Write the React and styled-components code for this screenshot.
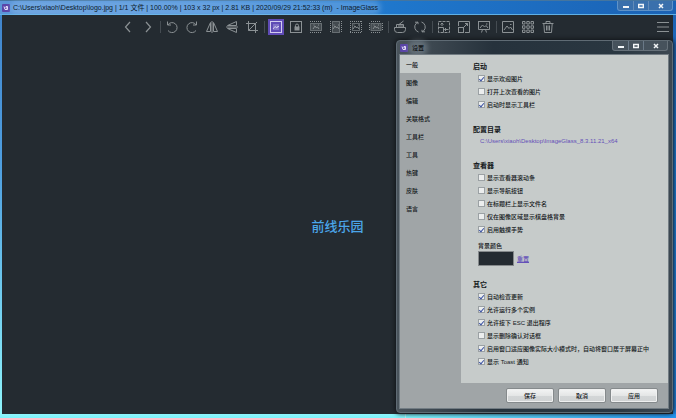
import { useState } from "react";
import styled, { createGlobalStyle, css } from "styled-components";

const GlobalStyle = createGlobalStyle`
  * {
    box-sizing: border-box;
  }
  body {
    margin: 0;
    font-family: "Liberation Sans", "Noto Sans CJK SC", sans-serif;
    font-size: 6px;
    font-weight: 500;
    color: #14181a;
  }
  button, input {
    font: inherit;
    margin: 0;
    padding: 0;
  }
`;

const Window = styled.div`
  position: relative;
  display: flex;
  flex-direction: column;
  height: 100vh;
  padding: 0 3px 4px 2px;
  background:
    linear-gradient(#8ff5fb, #7df3fa) bottom left / 60% 4px no-repeat,
    linear-gradient(90deg, #7df3fa, #2293ee) bottom right / 40% 4px no-repeat,
    linear-gradient(#3f83cb, #4f9fe0 40%, #8ff5fb) left / 2px 100% no-repeat,
    linear-gradient(#1c5fae, #1b7fdd 40%, #1d86e6) right / 3px 100% no-repeat;
`;

const TitleBar = styled.header`
  display: flex;
  align-items: center;
  height: 15px;
  margin: 0 -3px 0 -2px;
  padding: 0 3px 0 2px;
  border-top: 1px solid #44759f;
  border-bottom: 1px solid #5fb0e6;
  background: linear-gradient(90deg, #5c96d8, #4d90d8 30%, #1f77cc 58%, #1b62b4);
`;

const AppIcon = styled.span`
  display: grid;
  place-items: center;
  width: 8px;
  height: 8px;
  flex: none;
  border-radius: 1px;
  background: #5a45a8;
`;

const Title = styled.h1`
  margin: 0 0 0 3px;
  flex: none;
  font-size: 7px;
  line-height: 10px;
  font-weight: 400;
  color: #0d1b2c;
  white-space: pre;
  border-radius: 5px;
  background: rgba(150, 195, 240, 0.35);
  box-shadow: 0 0 5px 3px rgba(150, 195, 240, 0.35);
`;

const DialogTitle = styled.h2`
  margin: 0 0 0 4px;
  font-size: 6px;
  line-height: 8px;
  font-weight: 500;
  color: #0b0f12;
  border-radius: 4px;
  background: rgba(150, 165, 175, 0.4);
  box-shadow: 0 0 5px 4px rgba(150, 165, 175, 0.4);
`;

const Controls = styled.div`
  display: grid;
  grid-template-columns: 15px 15px 24px;
  align-self: flex-start;
  height: 10px;
  margin-left: auto;
  border: 1px solid ${(props) => (props.$dark ? "#66717a" : "#5f93c8")};
  border-top: 0;
  border-radius: 0 0 3px 3px;
  background: ${(props) => (props.$dark ? "#46525c" : "#3a70ac")};
`;

const ControlButton = styled.button`
  display: grid;
  place-items: center;
  border: 0;
  background: none;
  color: #f3f6f8;

  & + & {
    border-left: 1px solid rgba(160, 180, 200, 0.4);
  }
`;

const ToolBar = styled.nav`
  display: flex;
  align-items: center;
  gap: 4px;
  height: 24px;
  padding: 0 2px 0 118px;
  background: #242b31;
`;

const ToolButton = styled.button`
  display: grid;
  place-items: center;
  width: 16px;
  height: 16px;
  flex: none;
  border: 0;
  color: #8b9194;
  background: none;
  ${(props) =>
    props.$active &&
    css`
      color: #d2ccef;
      background: #5f4bb6;
    `}

  &:last-child {
    margin-left: auto;
  }
`;

const Separator = styled.span`
  width: 1px;
  height: 12px;
  margin-right: -1px;
  background: #454c52;
`;

const Viewer = styled.main`
  flex: 1;
  display: grid;
  place-items: center;
  background: #242b31;
`;

const Watermark = styled.span`
  font-size: 13px;
  line-height: 20px;
  color: #4ba6ea;
`;

const Dialog = styled.section`
  position: absolute;
  top: 40px;
  right: 3px;
  bottom: 5px;
  width: 277px;
  display: flex;
  flex-direction: column;
  padding: 0 4px 4px 3px;
  border: 1px solid #5f6b74;
  border-radius: 4px;
  background: linear-gradient(90deg, #4a545c, #26323c 35%, #2a3741 80%, #3c4852);
  box-shadow: 0 0 4px 1px #12161a;
`;

const DialogBar = styled.header`
  display: flex;
  align-items: center;
  height: 14px;
`;

const DialogBody = styled.div`
  flex: 1;
  display: grid;
  grid-template-columns: 61px 1fr;
  grid-template-rows: 1fr 25px;
  background: #a0a5a7;
  outline: 1px solid #727c83;
`;

const Tabs = styled.nav`
  display: flex;
  flex-direction: column;
`;

const Tab = styled.button`
  height: 18px;
  padding-left: 6px;
  border: 0;
  text-align: left;
  color: #14181a;
  background: ${(props) => (props.$active ? "#c6cbca" : "none")};
`;

const Page = styled.div`
  display: flex;
  flex-direction: column;
  gap: 13px;
  padding: 6px 6px 0 12px;
  background: #c6cbca;
`;

const Group = styled.section`
  display: flex;
  flex-direction: column;
`;

const GroupTitle = styled.h3`
  margin: 0;
  font-size: 7px;
  line-height: 11px;
  font-weight: 700;
`;

const CheckRow = styled.label`
  display: flex;
  align-items: center;
  gap: 2px;
  height: 13px;
  padding-left: 5px;
  white-space: nowrap;
`;

const CheckBox = styled.input.attrs({ type: "checkbox" })`
  appearance: none;
  display: grid;
  place-items: center;
  width: 7px;
  height: 7px;
  border: 1px solid #9ba1a4;
  background: #eceeee;

  &:checked::after {
    content: "";
    width: 2px;
    height: 4px;
    margin-bottom: 1px;
    border: solid #3c53a5;
    border-width: 0 1px 1px 0;
    box-sizing: content-box;
    transform: rotate(40deg);
  }
`;

const PathLink = styled.a`
  padding-left: 7px;
  line-height: 12px;
  color: #6450b8;
  text-decoration: none;
`;

const ColorBlock = styled.div`
  display: grid;
  grid-template-columns: 36px auto;
  justify-content: start;
  align-items: center;
  column-gap: 3px;
  padding: 6px 0 0 5px;
`;

const ColorLabel = styled.label`
  grid-column: 1 / -1;
  line-height: 9px;
`;

const Swatch = styled.button`
  height: 15px;
  border: 1px solid #85898b;
  background: #242b31;
`;

const ResetLink = styled.a`
  color: #6450b8;
`;

const Footer = styled.footer`
  grid-column: 1 / -1;
  display: flex;
  align-items: center;
  justify-content: flex-end;
  gap: 4px;
  padding-right: 10px;
`;

const FooterButton = styled.button`
  width: 48px;
  height: 15px;
  border: 1px solid #858a8c;
  border-radius: 2px;
  color: #14181a;
  background: linear-gradient(#f3f4f4, #e4e6e6 50%, #d3d6d7 50%, #d0d3d4);
  box-shadow: inset 0 0 0 1px #eff0f0;
`;

const Icon = ({ children }) => (
  <svg width="14" height="14" viewBox="0 0 14 14" fill="none" stroke="currentColor" strokeWidth="1" aria-hidden="true">
    {children}
  </svg>
);

const Photo = () => <path d="M4 9l2-3 1.5 2 1-1.2L10 9M4.5 5h1M9 5h1" />;

const icons = {
  prev: <path d="M9 2L4.5 7 9 12" strokeWidth="1.2" />,
  next: <path d="M5 2l4.5 5L5 12" strokeWidth="1.2" />,
  left: <path d="M2.5 1.5v3.5H6M2.8 5A5 5 0 1 1 3 10.5" />,
  right: <path d="M11.5 1.5v3.5H8M11.2 5A5 5 0 1 0 11 10.5" />,
  flipH: <path d="M5.5 2.5v9h-4zM8.5 2.5v9h4zM7 1v12" />,
  flipV: <path d="M11.5 5.5h-9l9-4zM11.5 8.5h-9l9 4zM1 7h12" />,
  crop: <path d="M3.5 1v9.5H13M1 3.5h9.5V13M3.5 10.5L12 2" />,
  auto: (
    <>
      <rect x="1.5" y="1.5" width="11" height="11" />
      <rect x="4" y="4" width="6" height="6" fill="currentColor" fillOpacity=".3" stroke="none" />
      <path d="M4 9l2-2.5L8 8l1-2 1 1" />
    </>
  ),
  lock: (
    <>
      <rect x="1.5" y="1.5" width="11" height="11" />
      <path d="M6.5 7V5.5a1.5 1.5 0 0 1 3 0V7" />
      <rect x="5.5" y="6.5" width="5" height="4" fill="currentColor" stroke="none" />
    </>
  ),
  width: (
    <>
      <path d="M1 1.5h12M1 12.5h12" strokeDasharray="1 1" />
      <rect x="1.5" y="3.5" width="11" height="7" fill="currentColor" fillOpacity=".3" strokeOpacity=".6" />
      <Photo />
    </>
  ),
  height: (
    <>
      <path d="M1.5 1v12M12.5 1v12" strokeDasharray="1 1" />
      <rect x="3.5" y="1.5" width="7" height="11" fill="currentColor" fillOpacity=".3" strokeOpacity=".6" />
      <Photo />
    </>
  ),
  fit: (
    <>
      <path d="M1 1.5h12M1 12.5h12M1.5 1v12M12.5 1v12" strokeDasharray="1 1" />
      <rect x="3.5" y="3.5" width="7" height="7" strokeOpacity=".6" />
      <Photo />
    </>
  ),
  fill: (
    <>
      <path d="M2 1.5h10M2 12.5h10M0.5 3v8M13.5 3v8" strokeDasharray="1 1" />
      <rect x="2" y="3.5" width="10" height="7" fill="currentColor" fillOpacity=".3" strokeOpacity=".6" />
      <Photo />
    </>
  ),
  open: <path d="M1.5 7.5h11v2a3 3 0 0 1-3 3h-5a3 3 0 0 1-3-3zM3.5 7V4.5h7V7M6 4.5L10.5 1M5 6h5" />,
  refresh: <path d="M5.5 12A5.3 5.3 0 0 1 3 3.5L5 2M2 2.2h3v2M8.5 2A5.3 5.3 0 0 1 11 10.5L9 12M12 11.8H9v-2" />,
  shrink: (
    <>
      <rect x="1.5" y="1.5" width="11" height="11" strokeDasharray="3 1" />
      <path d="M1.5 7.5h5v5M7.5 9.5h4M9 8L7.5 9.5 9 11M5 3v3M3.5 4.5L5 3l1.5 1.5" />
    </>
  ),
  expand: (
    <>
      <path d="M1.5 6V1.5h11v11H8" />
      <rect x="1.5" y="7.5" width="5" height="5" />
      <path d="M7 7l3.5-3.5M8 3.5h2.5V6" />
    </>
  ),
  slideshow: <path d="M1 1.5h12M1.5 1.5v8h11v-8M4.5 12.5l1-3M9.5 12.5l-1-3M3 8l2.5-3L7.5 7 9 5.5 11 8M9 4h1.5" />,
  picture: <path d="M1.5 1.5h11v11h-11zM3 10l3-4 2 2.5L9.5 7l2 3M9 4.5h1.5" />,
  grid: (
    <path d="M1.5 1.5h2.5v2.5H1.5zM5.8 1.5h2.5v2.5H5.8zM10 1.5h2.5v2.5H10zM1.5 5.8h2.5v2.5H1.5zM5.8 5.8h2.5v2.5H5.8zM10 5.8h2.5v2.5H10zM1.5 10h2.5v2.5H1.5zM5.8 10h2.5v2.5H5.8zM10 10h2.5v2.5H10z" />
  ),
  trash: <path d="M1.5 3.5h11M5 3.5v-2h4v2M2.8 3.5l.7 9h7l.7-9M5.5 5.5v5M7 5.5v5M8.5 5.5v5" />,
  menu: <path d="M1 2.5h12M1 7h12M1 11.5h12" />,
};

const tools = [
  ["prev", "上一张"],
  ["next", "下一张"],
  null,
  ["left", "向左旋转"],
  ["right", "向右旋转"],
  ["flipH", "水平翻转"],
  ["flipV", "垂直翻转"],
  ["crop", "裁剪"],
  null,
  ["auto", "自动缩放"],
  ["lock", "锁定缩放"],
  ["width", "适应宽度"],
  ["height", "适应高度"],
  ["fit", "适应窗口"],
  ["fill", "填充窗口"],
  null,
  ["open", "打开文件"],
  ["refresh", "刷新"],
  null,
  ["shrink", "窗口适应"],
  ["expand", "全屏"],
  ["slideshow", "幻灯片"],
  null,
  ["picture", "棋盘格"],
  ["grid", "缩略图"],
  ["trash", "删除"],
  ["menu", "菜单"],
];

const tabs = ["一般", "图像", "编辑", "关联格式", "工具栏", "工具", "热键", "皮肤", "语言"];

const startup = [
  ["显示欢迎图片", true],
  ["打开上次查看的图片", false],
  ["启动时显示工具栏", true],
];

const viewer = [
  ["显示查看器滚动条", false],
  ["显示导航按钮", false],
  ["在标题栏上显示文件名", false],
  ["仅在图像区域显示棋盘格背景", false],
  ["启用触摸手势", true],
];

const others = [
  ["自动检查更新", true],
  ["允许运行多个实例", true],
  ["允许按下 ESC 退出程序", true],
  ["显示删除确认对话框", false],
  ["启用窗口适应图像实际大小模式时，自动将窗口居于屏幕正中", true],
  ["显示 Toast 通知", true],
];

const Logo = () => (
  <AppIcon>
    <svg width="6" height="6" viewBox="0 0 6 6" fill="none" stroke="#e6e0fa" aria-hidden="true">
      <path d="M1 1.5l1 3h2.5v-3H3v1.5h1.5" />
    </svg>
  </AppIcon>
);

const WindowControls = ({ dark }) => (
  <Controls $dark={dark}>
    <ControlButton aria-label="最小化">
      <svg width="6" height="6" viewBox="0 0 6 6">
        <path d="M0 3h6v2H0z" fill="currentColor" />
      </svg>
    </ControlButton>
    <ControlButton aria-label="最大化">
      <svg width="6" height="6" viewBox="0 0 6 6">
        <path d="M.7 1.5h4.6v3H.7z" fill="none" stroke="currentColor" strokeWidth="1.4" />
      </svg>
    </ControlButton>
    <ControlButton aria-label="关闭">
      <svg width="6" height="6" viewBox="0 0 6 6">
        <path d="M1 1l4 4M5 1L1 5" stroke="currentColor" strokeWidth="1.5" />
      </svg>
    </ControlButton>
  </Controls>
);

const CheckGroup = ({ title, items, children }) => (
  <Group>
    <GroupTitle>{title}</GroupTitle>
    {items.map(([label, checked]) => (
      <CheckRow key={label}>
        <CheckBox defaultChecked={checked} />
        {label}
      </CheckRow>
    ))}
    {children}
  </Group>
);

function App() {
  const [tab, setTab] = useState("一般");

  return (
    <>
      <GlobalStyle />
      <Window>
        <TitleBar>
          <Logo />
          <Title>
            {"C:\\Users\\xiaoh\\Desktop\\logo.jpg | 1/1 文件 | 100.00% | 103 x 32 px | 2.81 KB | 2020/09/29 21:52:33 (m)  - ImageGlass"}
          </Title>
          <WindowControls />
        </TitleBar>
        <ToolBar>
          {tools.map((tool, i) =>
            tool ? (
              <ToolButton key={i} aria-label={tool[1]} $active={tool[0] === "auto"}>
                <Icon>{icons[tool[0]]}</Icon>
              </ToolButton>
            ) : (
              <Separator key={i} />
            )
          )}
        </ToolBar>
        <Viewer>
          <Watermark>前线乐园</Watermark>
        </Viewer>

        <Dialog>
          <DialogBar>
            <Logo />
            <DialogTitle>设置</DialogTitle>
            <WindowControls dark />
          </DialogBar>
          <DialogBody>
            <Tabs>
              {tabs.map((name) => (
                <Tab key={name} $active={name === tab} onClick={() => setTab(name)}>
                  {name}
                </Tab>
              ))}
            </Tabs>
            <Page>
              <CheckGroup title="启动" items={startup} />
              <Group>
                <GroupTitle>配置目录</GroupTitle>
                <PathLink href="#">{"C:\\Users\\xiaoh\\Desktop\\ImageGlass_8.3.11.21_x64"}</PathLink>
              </Group>
              <CheckGroup title="查看器" items={viewer}>
                <ColorBlock>
                  <ColorLabel htmlFor="background">背景颜色</ColorLabel>
                  <Swatch id="background" />
                  <ResetLink href="#">重置</ResetLink>
                </ColorBlock>
              </CheckGroup>
              <CheckGroup title="其它" items={others} />
            </Page>
            <Footer>
              <FooterButton>保存</FooterButton>
              <FooterButton>取消</FooterButton>
              <FooterButton>应用</FooterButton>
            </Footer>
          </DialogBody>
        </Dialog>
      </Window>
    </>
  );
}

export default App;
